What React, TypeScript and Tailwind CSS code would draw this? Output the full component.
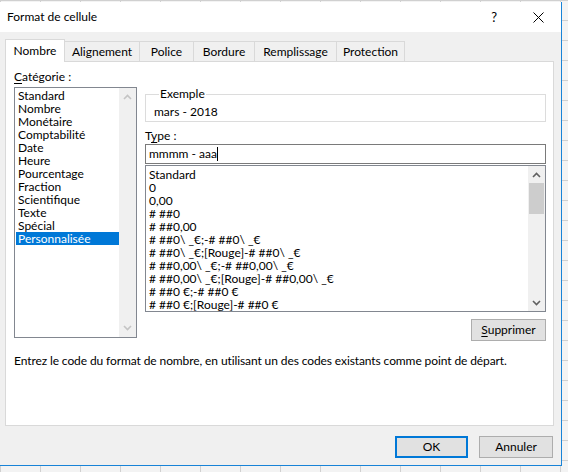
import React from "react";

const cats = [
  "Standard",
  "Nombre",
  "Monétaire",
  "Comptabilité",
  "Date",
  "Heure",
  "Pourcentage",
  "Fraction",
  "Scientifique",
  "Texte",
  "Spécial",
  "Personnalisée",
];

const fmts = [
  "Standard",
  "0",
  "0,00",
  "# ##0",
  "# ##0,00",
  "# ##0\\ _€;-# ##0\\ _€",
  "# ##0\\ _€;[Rouge]-# ##0\\ _€",
  "# ##0,00\\ _€;-# ##0,00\\ _€",
  "# ##0,00\\ _€;[Rouge]-# ##0,00\\ _€",
  "# ##0 €;-# ##0 €",
  "# ##0 €;[Rouge]-# ##0 €",
];

const tabs: [string, number][] = [
  ["Alignement", 75],
  ["Police", 54],
  ["Bordure", 61],
  ["Remplissage", 82],
  ["Protection", 68],
];

function Chevron({ up, color }: { up?: boolean; color: string }) {
  return (
    <svg width="9" height="6" viewBox="0 0 9 6">
      <polyline
        points={up ? "1,5 4.5,1.5 8,5" : "1,1 4.5,4.5 8,1"}
        fill="none"
        stroke={color}
        strokeWidth="1.6"
      />
    </svg>
  );
}

export default function App() {
  return (
    <div className="w-[568px] h-[472px] overflow-hidden bg-[#f3f3f3] bg-[linear-gradient(to_right,#d0d0d0_1px,transparent_1px),linear-gradient(to_bottom,#d0d0d0_1px,transparent_1px)] bg-[size:40px_20px] font-['Lato',sans-serif] text-[12px] leading-[16px] text-black">
      <div className="mt-[2px] w-[562px] h-[464px] border-r border-b border-[#1883d7] bg-[#f0f0f0] flex flex-col">
        {/* Title bar */}
        <div className="h-[30px] shrink-0 bg-white flex items-center">
          <span className="ml-[7px] text-[12px]">Format de cellule</span>
          <span className="ml-auto text-[13px]">?</span>
          <svg className="ml-[36px] mr-[17px]" width="11" height="11" viewBox="0 0 11 11">
            <path d="M0.5 0.5 L10.5 10.5 M10.5 0.5 L0.5 10.5" stroke="#000" strokeWidth="1" />
          </svg>
        </div>

        {/* Tabs */}
        <div className="mt-[7px] ml-[5px] flex items-end h-[22px] relative z-10">
          <div className="w-[60px] h-[23px] -mb-[1px] bg-white border-l border-t border-r border-[#d9d9d9] flex items-center justify-center">
            Nombre
          </div>
          {tabs.map(([t, w]) => (
            <div
              key={t}
              style={{ width: w }}
              className="h-[20px] bg-[#f0f0f0] border-t border-r border-[#d9d9d9] flex items-center justify-center"
            >
              {t}
            </div>
          ))}
        </div>

        {/* Panel */}
        <div className="ml-[5px] w-[549px] h-[365px] shrink-0 bg-white border border-[#d9d9d9] flex flex-col pt-[7px] pl-[8px]">
          <div className="flex gap-[8px]">
            {/* Left column */}
            <div className="w-[123px] flex flex-col">
              <div>
                <span className="underline underline-offset-2">C</span>atégorie :
              </div>
              <div className="mt-[2px] h-[251px] border border-[#828790] flex">
                <div className="flex-1 pt-[1px] pl-[1px]">
                  {cats.map((c) => (
                    <div
                      key={c}
                      className={
                        "h-[13px] leading-[13px] pl-[2px] " +
                        (c === "Personnalisée" ? "bg-[#0078d7] text-white" : "")
                      }
                    >
                      {c}
                    </div>
                  ))}
                </div>
                <div className="w-[17px] bg-[#f0f0f0] flex flex-col items-center justify-between py-[6px]">
                  <Chevron up color="#c4c4c4" />
                  <Chevron color="#c4c4c4" />
                </div>
              </div>
            </div>

            {/* Right column */}
            <div className="w-[401px] flex flex-col">
              <fieldset className="mt-[17px] w-[401px] border border-[#dcdcdc] pl-[8px] pt-[2px] pb-[1px]">
                <legend className="ml-[5px] px-[1px]">Exemple</legend>
                <div>mars - 2018</div>
              </fieldset>
              <div className="mt-[6px]">
                T<span className="underline underline-offset-2">y</span>pe :
              </div>
              <div className="h-[20px] border border-[#7a7a7a] flex items-center pl-[3px]">
                <span>mmmm - aaa</span>
                <span className="w-[1px] h-[14px] bg-black"></span>
              </div>
              <div className="mt-[1px] h-[147px] border border-[#828790] flex">
                <div className="flex-1 pt-[2px] pl-[3px]">
                  {fmts.map((f) => (
                    <div key={f} className="h-[13px] leading-[13px] whitespace-pre">
                      {f}
                    </div>
                  ))}
                </div>
                <div className="w-[17px] bg-[#f0f0f0] flex flex-col">
                  <div className="h-[17px] flex items-center justify-center">
                    <Chevron up color="#606060" />
                  </div>
                  <div className="mx-[1px] h-[31px] bg-[#cdcdcd]"></div>
                  <div className="flex-1"></div>
                  <div className="h-[17px] flex items-center justify-center">
                    <Chevron color="#606060" />
                  </div>
                </div>
              </div>
              <div className="mt-[7px] flex justify-end">
                <div className="w-[75px] h-[22px] bg-[#e1e1e1] border border-[#adadad] flex items-center justify-center">
                  <span>
                    <span className="underline underline-offset-2">S</span>upprimer
                  </span>
                </div>
              </div>
            </div>
          </div>
          <div className="mt-[12px] tracking-[-0.1px]">
            Entrez le code du format de nombre, en utilisant un des codes existants comme point de départ.
          </div>
        </div>

        {/* Buttons */}
        <div className="mt-[10px] flex justify-end gap-[11px] mr-[8px]">
          <div className="w-[73px] h-[22px] bg-[#e1e1e1] border-2 border-[#0078d7] flex items-center justify-center">
            OK
          </div>
          <div className="w-[74px] h-[22px] bg-[#e1e1e1] border border-[#adadad] flex items-center justify-center">
            Annuler
          </div>
        </div>
      </div>
    </div>
  );
}
